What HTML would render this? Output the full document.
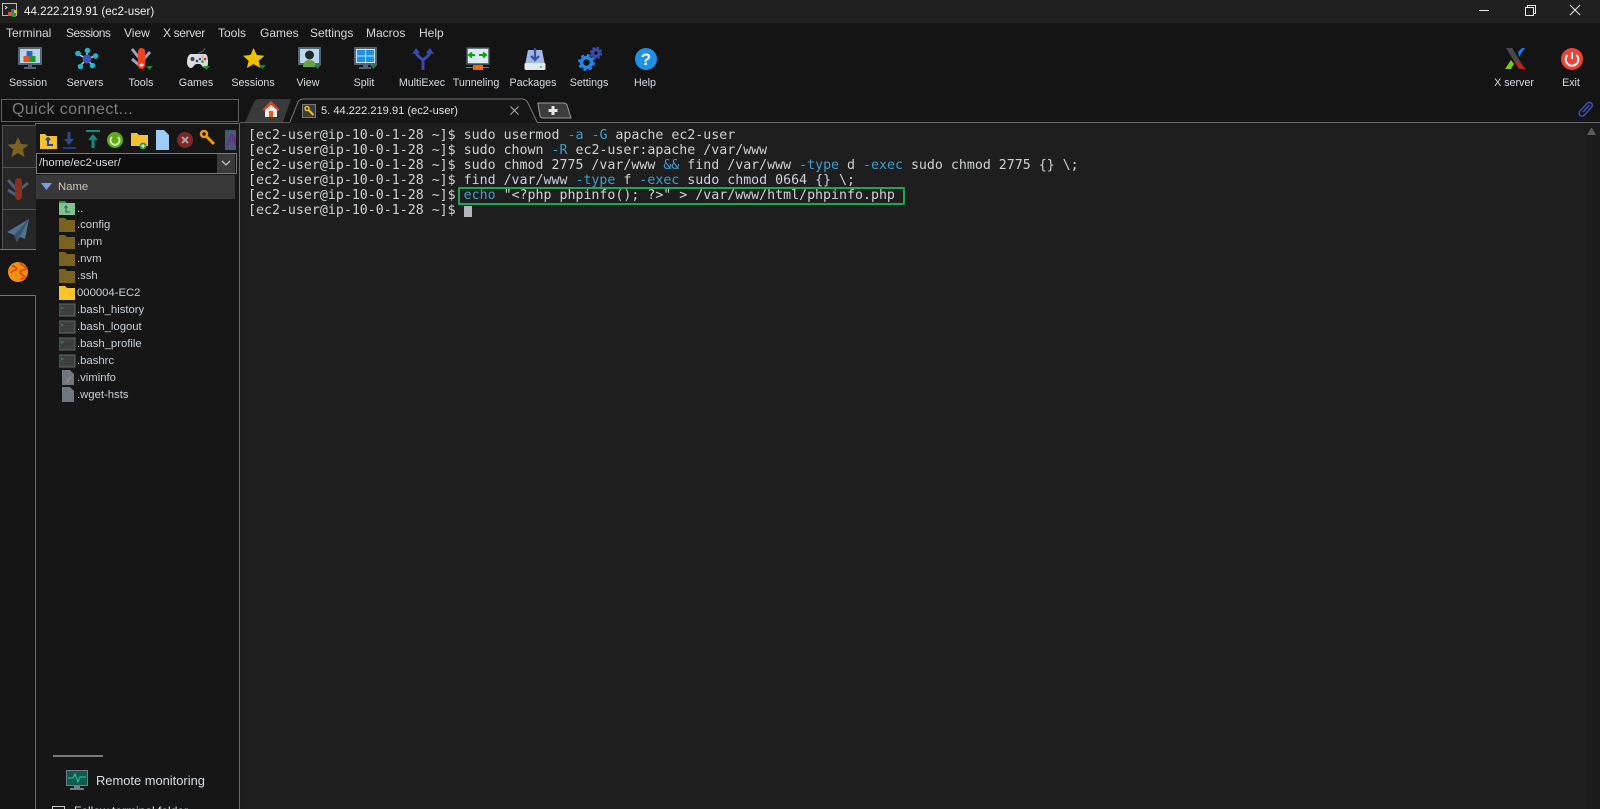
<!DOCTYPE html>
<html><head><meta charset="utf-8"><style>
html,body{margin:0;padding:0;background:#141414}
#p{position:relative;width:1600px;height:809px;overflow:hidden;background:#141414;font-family:"Liberation Sans",sans-serif;color:#d6dde6}
#p div,#p svg,#p span.a{position:absolute}
.m{top:26px;font-size:12px;line-height:14px;color:#d5d9de;white-space:nowrap}
.l{top:76px;width:80px;text-align:center;font-size:10.7px;line-height:14px;color:#d5dce4;white-space:nowrap}
.t{left:248px;font-family:"DejaVu Sans Mono",monospace;font-size:13.28px;line-height:15px;height:15px;color:#cfd2d4;white-space:pre}
.t b{font-weight:normal;color:#3f9fd0}
.f{left:77px;font-size:11.3px;line-height:14px;color:#c9d0d8;white-space:nowrap}
.i{left:59px}
</style></head><body><div id="p">
<div style="left:0;top:0;width:1600px;height:23px;background:#202020"></div>
<svg style="left:2px;top:3px" width="16" height="16"><rect x=".5" y=".5" width="14" height="12" fill="#222" stroke="#bbb"/><path d="M3 3l2 1.500-2 1.500" stroke="#ddd" fill="none"/><rect x="9" y="6" width="4" height="4" fill="#2a6fd8"/><rect x="6" y="9" width="4" height="4" fill="#e8502a"/><rect x="10" y="10" width="4" height="4" fill="#20a030"/><rect x="12" y="7" width="3" height="3" fill="#e8c020"/></svg>
<div style="left:24px;top:5px;font-size:11.6px;line-height:14px;color:#f0f0f0;white-space:nowrap">44.222.219.91 (ec2-user)</div>
<svg style="left:1470px;top:0" width="130" height="23" fill="none" stroke="#e8e8e8"><path d="M9 10.500h10"/><rect x="55.500" y="7.500" width="8" height="8"/><path d="M57.500 7.500v-2h8v8h-2"/><path d="M100 5l10 10M110 5l-10 10"/></svg>

<div class="m" style="left:6px">Terminal</div><div class="m" style="left:66px;letter-spacing:-.55px">Sessions</div><div class="m" style="left:124px">View</div><div class="m" style="left:163px;letter-spacing:-.35px">X server</div><div class="m" style="left:218px">Tools</div><div class="m" style="left:260px">Games</div><div class="m" style="left:310px">Settings</div><div class="m" style="left:366px">Macros</div><div class="m" style="left:419px">Help</div>

<!-- toolbar icons -->
<svg style="left:18px;top:47px" width="24" height="24"><rect x="1" y="1" width="22" height="16" fill="#b9d3e6" stroke="#54656f" stroke-width="2"/><rect x="10" y="18" width="4" height="3" fill="#54656f"/><rect x="6" y="20" width="12" height="2" fill="#54656f"/><rect x="8.500" y="4" width="6" height="6" fill="#2a5fe0"/><rect x="5.500" y="9" width="6" height="6" fill="#e8501c"/><rect x="11.500" y="9" width="6" height="6" fill="#10a020"/></svg>
<svg style="left:75px;top:47px" width="24" height="24"><g stroke="#c8d0da" stroke-width="1.500"><path d="M12 12L12 3M12 12L3 7M12 12L20 9M12 12L5 19M12 12L17 18"/></g><g fill="#1fb5c8"><circle cx="12.500" cy="3.500" r="2.800"/><circle cx="3" cy="6.500" r="2.800"/><circle cx="20.500" cy="9" r="2.800"/><circle cx="5.500" cy="19.500" r="2.800"/><circle cx="17.500" cy="18.500" r="2.800"/></g><circle cx="12" cy="12" r="4.500" fill="#3e55b8"/></svg>
<svg style="left:130px;top:47px" width="24" height="24"><path d="M2 2l8 10M20 5l-8 9M2 12l7 6" stroke="#9a9fc8" stroke-width="3" fill="none"/><rect x="8" y="1" width="7" height="21" rx="3.500" fill="#f0421a"/><path d="M9.500 18h4M11.500 16v4" stroke="#fff" stroke-width="1.400"/><path d="M16 19h7l-3.500 4z" fill="#188a20"/></svg>
<svg style="left:186px;top:47px" width="24" height="24"><path d="M12 8c0-3 3-2 5-4 1-1 2-2 2-3" stroke="#55606a" fill="none"/><path d="M5 7h14c2 0 3 3 3 8 0 4-1 6-3 6-2 0-3-3-5-4h-4c-2 1-3 4-5 4-2 0-4-2-4-6 0-5 2-8 4-8z" fill="#d8dcdf"/><circle cx="6.500" cy="12" r="2" fill="#444"/><circle cx="11" cy="14" r="1.300" fill="#444"/><circle cx="14" cy="12" r="1.300" fill="#3050e0"/><circle cx="19" cy="12" r="1.300" fill="#e02020"/><circle cx="16.500" cy="9.500" r="1.300" fill="#e8c020"/><circle cx="16.500" cy="14.500" r="1.300" fill="#20a030"/><path d="M17 19h7l-3.500 4z" fill="#188a20"/></svg>
<svg style="left:242px;top:47px" width="24" height="24"><path d="M11.500 1l3.300 7 7.700.7-5.800 5 1.800 7.300-7-3.900-6.600 3.900 1.700-7.300-5.600-5 7.500-.7z" fill="#f0c000"/><path d="M17 18h7l-3.500 4z" fill="#188a20"/></svg>
<svg style="left:298px;top:47px" width="24" height="24"><rect x="1" y="1" width="21" height="16" fill="#b9d9ee" stroke="#54656f" stroke-width="2"/><circle cx="11.500" cy="8" r="4.500" fill="#22272b"/><path d="M5 20c0-5 3-7 6.500-7s6.500 2 6.500 7z" fill="#6aa040"/><path d="M16 18h7l-3.500 4z" fill="#188a20"/></svg>
<svg style="left:354px;top:47px" width="24" height="24"><rect x="1" y="1" width="21" height="16" fill="#cfe3f2" stroke="#54656f" stroke-width="2"/><g fill="#1f8fe8"><rect x="3" y="3" width="8" height="5.500"/><rect x="12" y="3" width="8" height="5.500"/><rect x="3" y="9.500" width="8" height="5.500"/><rect x="12" y="9.500" width="8" height="5.500"/></g><rect x="9" y="18" width="5" height="2" fill="#54656f"/><rect x="5" y="20" width="12" height="2" fill="#54656f"/><path d="M16 18h7l-3.500 4z" fill="#188a20"/></svg>
<svg style="left:411px;top:47px" width="24" height="24"><path d="M12 23V14C12 11 6 11 5 5M12 14c0-3 6-3 7-9" stroke="#3a4cab" stroke-width="3" fill="none"/><path d="M1 7l4-6 4 5zM15 6l4-5 4 6z" fill="#3a4cab"/></svg>
<svg style="left:466px;top:47px" width="24" height="24"><rect x="1" y="1" width="22" height="16" fill="#d9ecf4" stroke="#465058" stroke-width="1.500"/><path d="M3 8h6M6 5.500L3 8l3 2.500M13 8h7M17 5.500l3 2.500-3 2.500" stroke="#10a010" stroke-width="2" fill="none"/><rect x="0" y="20" width="23" height="1" fill="#777"/><rect x="7" y="18" width="10" height="5" fill="#f06a10"/></svg>
<svg style="left:523px;top:47px" width="24" height="24"><path d="M5 3h14l3 15H2z" fill="#9fb8e0"/><rect x="1.500" y="16" width="21" height="7" rx="1.500" fill="#e4e9f0"/><circle cx="18" cy="20" r="1" fill="#50c030"/><path d="M12 1v11M8 9l4 4 4-4" stroke="#3a4cab" stroke-width="2.200" fill="none"/></svg>
<svg style="left:578px;top:47px" width="24" height="24"><circle cx="8.500" cy="15.500" r="5" fill="none" stroke="#1e88e8" stroke-width="3.500"/><circle cx="8.500" cy="15.500" r="7.500" fill="none" stroke="#1e88e8" stroke-width="2" stroke-dasharray="3 2.900"/><circle cx="18" cy="6" r="3.300" fill="none" stroke="#3a4cab" stroke-width="3"/><circle cx="18" cy="6" r="5.400" fill="none" stroke="#3a4cab" stroke-width="1.800" stroke-dasharray="2.500 1.800"/></svg>
<svg style="left:634px;top:47px" width="24" height="24"><circle cx="12" cy="12" r="11" fill="#1e90e8"/><text x="12" y="18" text-anchor="middle" font-family="Liberation Sans" font-weight="bold" font-size="17" fill="#fff">?</text></svg>
<svg style="left:1503px;top:47px" width="24" height="24"><path d="M3 1h6l13 21h-6z" fill="#4a4a4a"/><path d="M15 5l4-4h3l-6 9z" fill="#1e78e8"/><path d="M2 22l6-9 3 4-3 5z" fill="#7cc814"/><path d="M14 14l9 8h-5l-6-6z" fill="#d81818"/></svg>
<svg style="left:1560px;top:47px" width="24" height="24"><circle cx="12" cy="12" r="11" fill="#ef4136"/><path d="M7.500 8a6.300 6.300 0 1 0 9 0M12 5v7" stroke="#fff" stroke-width="2" fill="none"/></svg>

<div class="l" style="left:-12px">Session</div><div class="l" style="left:45px">Servers</div><div class="l" style="left:101px">Tools</div><div class="l" style="left:156px">Games</div><div class="l" style="left:213px">Sessions</div><div class="l" style="left:268px">View</div><div class="l" style="left:324px">Split</div><div class="l" style="left:382px">MultiExec</div><div class="l" style="left:436px">Tunneling</div><div class="l" style="left:493px">Packages</div><div class="l" style="left:549px">Settings</div><div class="l" style="left:605px">Help</div><div class="l" style="left:1474px">X server</div><div class="l" style="left:1531px">Exit</div>

<!-- quick connect -->
<div style="left:1px;top:99px;width:236px;height:21px;border:1px solid #5f5f5f;background:#111"></div>
<div style="left:12px;top:100px;font-size:16px;line-height:20px;color:#7c7c7c;letter-spacing:.4px;white-space:nowrap">Quick connect...</div>

<!-- tabs -->
<div style="left:537px;top:122px;width:1063px;height:1px;background:#6a6a6a"></div>
<svg style="left:240px;top:97px" width="360" height="27"><path d="M5 25L14 5Q16 2 19 2H51L43 25z" fill="#3a3a3a"/><path d="M50 25L58 5Q60 2 63 2H282Q286 2 288 6L297 25" fill="#161616" stroke="#777"/><path d="M298 7Q297 6 299 6H323Q326 6 327 8L331 21H303Q301 21 300 19z" fill="#3c3c3c" stroke="#9a9a9a"/><path d="M0 25.500H50" stroke="#5a5a5a"/><path d="M313 9v9M308.500 13.500h9" stroke="#e8e8e8" stroke-width="3"/></svg>
<svg style="left:262px;top:100px" width="18" height="18"><path d="M9 1L0.500 9.500l2 1.500L9 4.500l6.500 6.500 2-1.500z" fill="#e2442a"/><path d="M3 10l6-5 6 5v7H3z" fill="#f2ede6"/><rect x="7" y="11" width="4" height="6" fill="#e25a20"/></svg>
<div style="left:302px;top:104px;width:14px;height:14px;background:#3c3c3c;border:1px solid #777;box-sizing:border-box"></div>
<svg style="left:302px;top:104px" width="14" height="14"><circle cx="5" cy="4.500" r="2" fill="none" stroke="#f0c020" stroke-width="1.500"/><path d="M6.500 6l5 5" stroke="#f0c020" stroke-width="2"/></svg>
<div style="left:321px;top:104px;font-size:11.1px;line-height:14px;color:#e0e0e0;white-space:nowrap">5. 44.222.219.91 (ec2-user)</div>
<svg style="left:509px;top:105px" width="11" height="11"><path d="M1.500 1.500l8 8M9.500 1.500l-8 8" stroke="#b0b0b0"/></svg>
<svg style="left:1576px;top:100px" width="20" height="19" fill="none"><path d="M3.500 11.500L11 3.500c2-2.200 6.500-.5 5 3L8.500 15c-2 2.300-6.500 1-5-3.500M7 12l6.500-7" stroke="#3b4fb4" stroke-width="1.600"/></svg>

<!-- terminal -->
<div style="left:244px;top:123px;width:1356px;height:686px;background:#1e1e1e"></div>
<div style="left:240px;top:123px;width:4px;height:686px;background:#1b1b1b"></div>
<div style="left:1585px;top:123px;width:15px;height:686px;background:#1c1c1c"></div>
<svg style="left:1587px;top:127px" width="10" height="9"><path d="M0 8L4 1h1l4 7z" fill="#5a5a5a"/></svg>

<div class="t" style="top:128px">[ec2-user@ip-10-0-1-28 ~]$ sudo usermod <b>-a</b> <b>-G</b> apache ec2-user</div>
<div class="t" style="top:143px">[ec2-user@ip-10-0-1-28 ~]$ sudo chown <b>-R</b> ec2-user:apache /var/www</div>
<div class="t" style="top:158px">[ec2-user@ip-10-0-1-28 ~]$ sudo chmod 2775 /var/www <b>&amp;&amp;</b> find /var/www <b>-type</b> d <b>-exec</b> sudo chmod 2775 {} \;</div>
<div class="t" style="top:173px">[ec2-user@ip-10-0-1-28 ~]$ find /var/www <b>-type</b> f <b>-exec</b> sudo chmod 0664 {} \;</div>
<div class="t" style="top:188px">[ec2-user@ip-10-0-1-28 ~]$ <b>echo</b> "&lt;?php phpinfo(); ?&gt;" &gt; /var/www/html/phpinfo.php</div>
<div class="t" style="top:203px">[ec2-user@ip-10-0-1-28 ~]$</div>
<div style="left:464px;top:206px;width:8px;height:11px;background:#b4b4bc"></div>
<div style="left:458px;top:187px;width:443px;height:14px;border:2px solid #1fa552;border-radius:1px"></div>

<!-- sidebar -->
<div style="left:35px;top:123px;width:205px;height:686px;background:#161616;border-left:1px solid #6a6a6a;border-right:1px solid #6a6a6a;box-sizing:border-box"></div>
<div style="left:35px;top:123px;width:205px;height:1px;background:#6a6a6a"></div>
<div style="left:2px;top:125px;width:33px;height:41px;background:#262626;border:1px solid #555;border-right:none;box-sizing:content-box"></div>
<div style="left:2px;top:167px;width:33px;height:41px;background:#262626;border:1px solid #555;border-right:none"></div>
<div style="left:2px;top:209px;width:33px;height:39px;background:#262626;border:1px solid #555;border-right:none"></div>
<div style="left:0;top:249px;width:36px;height:45px;background:#161616;border-top:1px solid #777;border-bottom:1px solid #777"></div>
<div style="left:35px;top:295px;width:1px;height:514px;background:#6a6a6a"></div>
<svg style="left:6px;top:135px" width="24" height="24"><path d="M12 2l3 7 7.500.6-5.700 4.900 1.800 7.500-6.600-4-6.600 4 1.800-7.500L1.500 9.600 9 9z" fill="#7a6420"/></svg>
<svg style="left:6px;top:176px" width="24" height="24"><path d="M2 4l8 9M22 7l-9 7M2 14l8 5" stroke="#555e70" stroke-width="3" fill="none"/><rect x="9" y="2" width="7" height="22" rx="3.500" fill="#8a3020"/></svg>
<svg style="left:6px;top:218px" width="24" height="24"><path d="M23 1L1 14l7 3 3 7 3-5 5 2z" fill="#4f7290"/><path d="M23 1L8 17l3 7z" fill="#39546c"/></svg>
<svg style="left:8px;top:261px" width="20" height="22"><circle cx="10" cy="11" r="10" fill="#f09010"/><path d="M4 5c3 0 5 2 4 4-2 1-4 0-5 3M12 2c2 3 6 3 6 6-2 2-4 0-6 3 1 3 4 3 5 5-2 2-4 2-5 2" fill="none" stroke="#e04a10" stroke-width="1.800"/></svg>

<svg style="left:36px;top:130px" width="204" height="20">
<path d="M4 4h5l2 2h10v13H4z" fill="#f2c230"/><path d="M12 8v7h5M10 10l2-2 2 2" stroke="#2844a0" stroke-width="2" fill="none"/>
<path d="M33 2v9" stroke="#2a4a8a" stroke-width="3"/><path d="M28 9h10l-5 6z" fill="#2a4a8a"/><path d="M27 18h13" stroke="#1f3d78" stroke-width="2"/>
<path d="M50 1h14" stroke="#0f8a80" stroke-width="2"/><path d="M57 18V9" stroke="#0f8a80" stroke-width="3"/><path d="M52 10l5-6 5 6z" fill="#0f8a80"/>
<circle cx="79" cy="10" r="8" fill="#60a818"/><path d="M76 7a4.500 4.500 0 1 0 6 0" fill="none" stroke="#cfe8b0" stroke-width="2"/>
<path d="M95 3h6l2 2h9v11H95z" fill="#f2c230"/><circle cx="107" cy="16" r="3.500" fill="#2a9a4a"/><path d="M105 16h4M107 14v4" stroke="#fff"/>
<path d="M120 0h8l5 5v15h-13z" fill="#9accf4"/>
<circle cx="149" cy="10" r="8" fill="#7a2a26"/><path d="M146 7l6 6M152 7l-6 6" stroke="#b0a0a0" stroke-width="2"/>
<circle cx="168" cy="4" r="3" fill="none" stroke="#f09a10" stroke-width="2.500"/><path d="M170 6l8 8" stroke="#f09a10" stroke-width="3"/>
<rect x="189" y="0" width="11" height="20" fill="#465a70"/></svg>
<div style="left:226px;top:131px;width:10px;height:18px;overflow:hidden;font-size:17px;line-height:18px;font-weight:bold;color:#6a2a8a;font-family:'Liberation Serif',serif">A</div>

<div style="left:36px;top:153px;width:199px;height:19px;border:1px solid #7a7a7a;background:#0e0e0e"></div>
<div style="left:39px;top:156px;font-size:11.300px;line-height:14px;color:#d6dce2;white-space:nowrap">/home/ec2-user/</div>
<div style="left:217px;top:154px;width:18px;height:19px;background:#3a3a3a"></div>
<svg style="left:221px;top:160px" width="10" height="7"><path d="M1 1l4 4 4-4" fill="none" stroke="#c0c0c0" stroke-width="1.300"/></svg>
<div style="left:36px;top:175px;width:199px;height:24px;background:#383838"></div>
<svg style="left:41px;top:183px" width="12" height="8"><path d="M0 0h11L5.500 7z" fill="#7a9be8"/></svg>
<div style="left:58px;top:179px;font-size:11.300px;line-height:16px;color:#d0c8b0">Name</div>

<svg style="left:59px;top:200px" width="17" height="17"><path d="M0 1h6l2 2H0z" fill="#1f9a3a"/><rect y="3" width="16" height="12" fill="#7fc48f"/><path d="M7 6v6h4M5.500 8L7 6l1.500 2" stroke="#3a6a80" stroke-width="1.300" fill="none"/></svg>
<svg style="left:59px;top:217px" width="17" height="17"><path d="M0 1h6l2 2h8v12H0z" fill="#7a6220"/></svg>
<svg style="left:59px;top:234px" width="17" height="17"><path d="M0 1h6l2 2h8v12H0z" fill="#7a6220"/></svg>
<svg style="left:59px;top:251px" width="17" height="17"><path d="M0 1h6l2 2h8v12H0z" fill="#7a6220"/></svg>
<svg style="left:59px;top:268px" width="17" height="17"><path d="M0 1h6l2 2h8v12H0z" fill="#7a6220"/></svg>
<svg style="left:59px;top:285px" width="17" height="17"><path d="M0 1h6l2 2h8v12H0z" fill="#f8c428"/></svg>
<svg style="left:59px;top:302px" width="17" height="17"><rect y="2" width="16" height="12" fill="#3c3f3e" stroke="#666"/><path d="M2 5l2 1-2 1" stroke="#2a8a4a" fill="none"/></svg>
<svg style="left:59px;top:319px" width="17" height="17"><rect y="2" width="16" height="12" fill="#3c3f3e" stroke="#666"/><path d="M2 5l2 1-2 1" stroke="#2a8a4a" fill="none"/></svg>
<svg style="left:59px;top:336px" width="17" height="17"><rect y="2" width="16" height="12" fill="#3c3f3e" stroke="#666"/><path d="M2 5l2 1-2 1" stroke="#2a8a4a" fill="none"/></svg>
<svg style="left:59px;top:353px" width="17" height="17"><rect y="2" width="16" height="12" fill="#3c3f3e" stroke="#666"/><path d="M2 5l2 1-2 1" stroke="#2a8a4a" fill="none"/></svg>
<svg style="left:61px;top:369px" width="14" height="17"><path d="M1 1h8l4 4v11H1z" fill="#6f7780"/><path d="M5 14l5-6" stroke="#a88a50" stroke-width="1.500"/></svg>
<svg style="left:61px;top:386px" width="14" height="17"><path d="M1 1h8l4 4v11H1z" fill="#6f7780"/></svg>

<div class="f" style="top:202px">..</div><div class="f" style="top:218px">.config</div><div class="f" style="top:235px">.npm</div><div class="f" style="top:252px">.nvm</div><div class="f" style="top:269px">.ssh</div><div class="f" style="top:286px">000004-EC2</div><div class="f" style="top:303px">.bash_history</div><div class="f" style="top:320px">.bash_logout</div><div class="f" style="top:337px">.bash_profile</div><div class="f" style="top:354px">.bashrc</div><div class="f" style="top:371px">.viminfo</div><div class="f" style="top:388px">.wget-hsts</div>

<div style="left:53px;top:755px;width:50px;height:2px;background:#7a7a7a"></div>
<svg style="left:66px;top:770px" width="23" height="21"><rect x=".500" y=".500" width="21" height="15" fill="#0f5a50" stroke="#6f7f88"/><path d="M2 8h5l2-4 3 8 2-5h6" stroke="#20d0a0" fill="none"/><rect x="8" y="16" width="6" height="2" fill="#6f7f88"/><rect x="4" y="18" width="14" height="2" fill="#6f7f88"/></svg>
<div style="left:96px;top:773px;font-size:12.900px;line-height:15px;color:#d5dfe8;white-space:nowrap">Remote monitoring</div>
<div style="left:52px;top:806px;width:11px;height:11px;border:1px solid #ccc"></div>
<div style="left:74px;top:804px;font-size:12px;line-height:15px;color:#d5dfe8;white-space:nowrap">Follow terminal folder</div>
</div></body></html>
